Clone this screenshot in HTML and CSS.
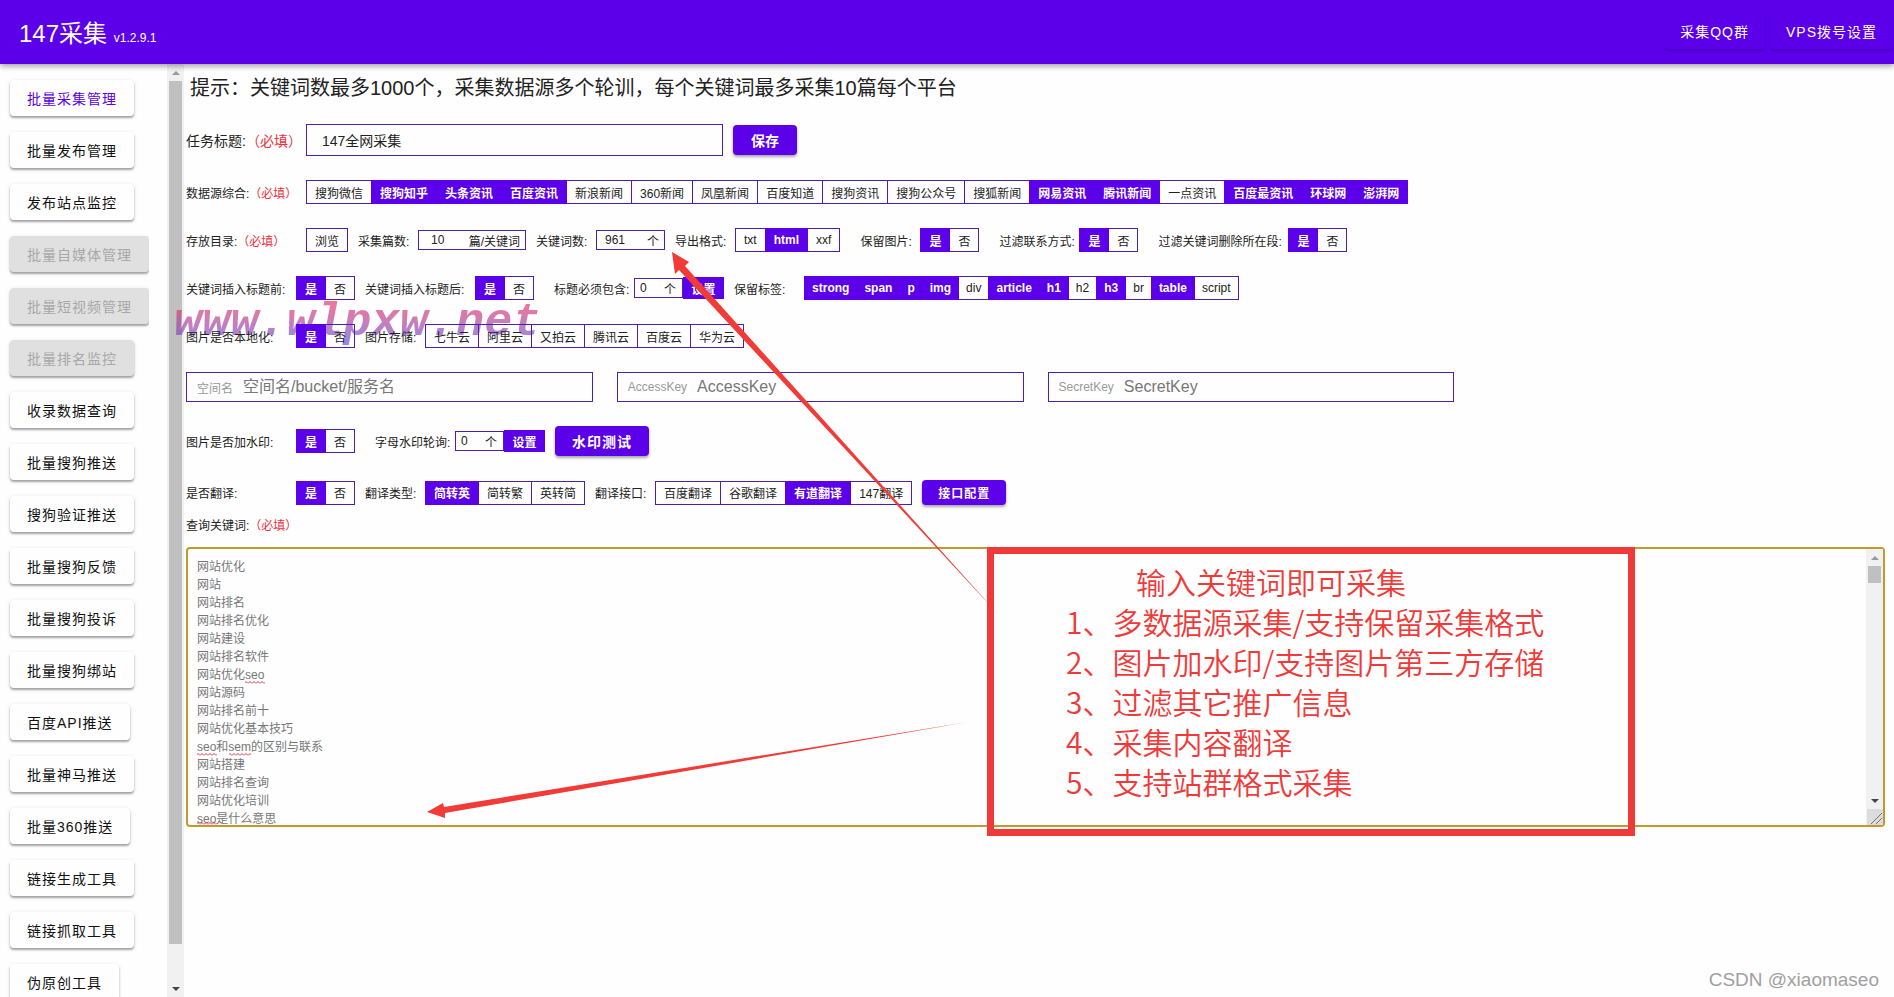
FILE: index.html
```html
<!DOCTYPE html>
<html lang="zh-CN">
<head>
<meta charset="utf-8">
<title>147采集</title>
<link rel="stylesheet" href="styles.css">
</head>
<body>
<header class="topbar">
  <h1 class="brand">147采集 <small class="version">v1.2.9.1</small></h1>
  <nav class="top-actions">
    <button class="top-btn" type="button">采集QQ群</button>
    <button class="top-btn" type="button">VPS拨号设置</button>
  </nav>
</header>

<div class="shell">
  <aside class="sidebar">
    <nav class="menu">
      <button class="menu-btn current" type="button">批量采集管理</button>
      <button class="menu-btn" type="button">批量发布管理</button>
      <button class="menu-btn" type="button">发布站点监控</button>
      <button class="menu-btn" type="button" disabled>批量自媒体管理</button>
      <button class="menu-btn" type="button" disabled>批量短视频管理</button>
      <button class="menu-btn" type="button" disabled>批量排名监控</button>
      <button class="menu-btn" type="button">收录数据查询</button>
      <button class="menu-btn" type="button">批量搜狗推送</button>
      <button class="menu-btn" type="button">搜狗验证推送</button>
      <button class="menu-btn" type="button">批量搜狗反馈</button>
      <button class="menu-btn" type="button">批量搜狗投诉</button>
      <button class="menu-btn" type="button">批量搜狗绑站</button>
      <button class="menu-btn" type="button">百度API推送</button>
      <button class="menu-btn" type="button">批量神马推送</button>
      <button class="menu-btn" type="button">批量360推送</button>
      <button class="menu-btn" type="button">链接生成工具</button>
      <button class="menu-btn" type="button">链接抓取工具</button>
      <button class="menu-btn" type="button">伪原创工具</button>
    </nav>
    <div class="scrollbar" aria-hidden="true">
      <span class="arrow up"></span>
      <span class="track"><span class="thumb"></span></span>
      <span class="arrow down"></span>
    </div>
  </aside>

  <main class="content">
    <p class="tip">提示：关键词数最多1000个，采集数据源多个轮训，每个关键词最多采集10篇每个平台</p>

    <div class="row">
      <label class="lead lead-title" for="title">任务标题:<span class="required">（必填）</span></label>
      <input class="title-input" id="title" type="text" value="147全网采集">
      <button class="raised" type="button">保存</button>
    </div>

    <div class="row">
      <span class="lead">数据源综合:<span class="required">（必填）</span></span>
      <div class="seg">
        <button type="button">搜狗微信</button><button type="button" class="on">搜狗知乎</button><button type="button" class="on">头条资讯</button><button type="button" class="on">百度资讯</button><button type="button">新浪新闻</button><button type="button">360新闻</button><button type="button">凤凰新闻</button><button type="button">百度知道</button><button type="button">搜狗资讯</button><button type="button">搜狗公众号</button><button type="button">搜狐新闻</button><button type="button" class="on">网易资讯</button><button type="button" class="on">腾讯新闻</button><button type="button">一点资讯</button><button type="button" class="on">百度最资讯</button><button type="button" class="on">环球网</button><button type="button" class="on">澎湃网</button>
      </div>
    </div>

    <div class="row">
      <span class="lead">存放目录:<span class="required">（必填）</span></span>
      <div class="seg"><button type="button">浏览</button></div>
      <div class="item">
        <label class="cap" for="count">采集篇数:</label>
        <span class="unit-box unit-wide"><input id="count" type="text" value="10"><span>篇/关键词</span></span>
      </div>
      <div class="item">
        <label class="cap" for="words">关键词数:</label>
        <span class="unit-box unit-mid"><input id="words" type="text" value="961"><span>个</span></span>
      </div>
      <div class="item">
        <span class="cap">导出格式:</span>
        <div class="seg"><button type="button">txt</button><button type="button" class="on">html</button><button type="button">xxf</button></div>
      </div>
      <div class="item apart">
        <span class="cap">保留图片:</span>
        <div class="seg"><button type="button" class="on">是</button><button type="button">否</button></div>
      </div>
      <div class="item apart">
        <span class="cap cap-6">过滤联系方式:</span>
        <div class="seg"><button type="button" class="on">是</button><button type="button">否</button></div>
      </div>
      <div class="item apart">
        <span class="cap cap-10">过滤关键词删除所在段:</span>
        <div class="seg"><button type="button" class="on">是</button><button type="button">否</button></div>
      </div>
    </div>

    <div class="row">
      <span class="lead lead-narrow">关键词插入标题前:</span>
      <div class="seg"><button type="button" class="on">是</button><button type="button">否</button></div>
      <div class="item">
        <span class="cap cap-8">关键词插入标题后:</span>
        <div class="seg"><button type="button" class="on">是</button><button type="button">否</button></div>
      </div>
      <div class="item apart">
        <label class="cap cap-6" for="must">标题必须包含:</label>
        <span class="unit-box"><input id="must" type="text" value="0"><span>个</span></span>
        <button class="set-btn" type="button">设置</button>
      </div>
      <div class="item">
        <span class="cap cap-5">保留标签:</span>
        <div class="seg tags"><button type="button" class="on">strong</button><button type="button" class="on">span</button><button type="button" class="on">p</button><button type="button" class="on">img</button><button type="button">div</button><button type="button" class="on">article</button><button type="button" class="on">h1</button><button type="button">h2</button><button type="button" class="on">h3</button><button type="button">br</button><button type="button" class="on">table</button><button type="button">script</button></div>
      </div>
    </div>

    <div class="row">
      <span class="lead lead-narrow">图片是否本地化:</span>
      <div class="seg"><button type="button" class="on">是</button><button type="button">否</button></div>
      <div class="item">
        <span class="cap">图片存储:</span>
        <div class="seg"><button type="button">七牛云</button><button type="button">阿里云</button><button type="button">又拍云</button><button type="button">腾讯云</button><button type="button">百度云</button><button type="button">华为云</button></div>
      </div>
    </div>

    <div class="keys">
      <label class="key-box"><span>空间名</span><input type="text" placeholder="空间名/bucket/服务名"></label>
      <label class="key-box"><span>AccessKey</span><input type="text" placeholder="AccessKey"></label>
      <label class="key-box"><span>SecretKey</span><input type="text" placeholder="SecretKey"></label>
    </div>

    <div class="row">
      <span class="lead lead-narrow">图片是否加水印:</span>
      <div class="seg"><button type="button" class="on">是</button><button type="button">否</button></div>
      <div class="item apart">
        <label class="cap cap-6" for="mark">字母水印轮询:</label>
        <span class="unit-box"><input id="mark" type="text" value="0"><span>个</span></span>
        <button class="set-btn" type="button">设置</button>
      </div>
      <button class="raised spaced" type="button">水印测试</button>
    </div>

    <section class="query">
      <div class="row">
        <span class="lead lead-narrow">是否翻译:</span>
        <div class="seg"><button type="button" class="on">是</button><button type="button">否</button></div>
        <div class="item">
          <span class="cap">翻译类型:</span>
          <div class="seg"><button type="button" class="on">简转英</button><button type="button">简转繁</button><button type="button">英转简</button></div>
        </div>
        <div class="item">
          <span class="cap">翻译接口:</span>
          <div class="seg"><button type="button">百度翻译</button><button type="button">谷歌翻译</button><button type="button" class="on">有道翻译</button><button type="button">147翻译</button></div>
        </div>
        <button class="raised small" type="button">接口配置</button>
      </div>
      <label class="query-label" for="query">查询关键词:<span class="required">（必填）</span></label>
      <div class="query-box">
        <textarea id="query" rows="15" spellcheck="false">网站优化
网站
网站排名
网站排名优化
网站建设
网站排名软件
网站优化seo
网站源码
网站排名前十
网站优化基本技巧
seo和sem的区别与联系
网站搭建
网站排名查询
网站优化培训
seo是什么意思</textarea>
        <div class="scrollbar" aria-hidden="true">
          <span class="arrow up"></span>
          <span class="track"><span class="thumb thumb-short"></span></span>
          <span class="arrow down"></span>
          <svg class="grip" width="16" height="16" viewBox="0 0 16 16"><path d="M4 15L15 4M9 15L15 9" stroke="#777" fill="none"/></svg>
        </div>
        <svg class="squiggles" width="140" height="276" aria-hidden="true">
          <defs><pattern id="wave" width="4" height="3" patternUnits="userSpaceOnUse"><path d="M0 2.5L2 .5L4 2.5" fill="none" stroke="#e8304a"/></pattern></defs>
          <g fill="url(#wave)">
            <rect x="57" y="132" width="20" height="3"/>
            <rect x="9" y="204" width="20" height="3"/>
            <rect x="41" y="204" width="22" height="3"/>
            <rect x="9" y="273" width="20" height="3"/>
          </g>
        </svg>
      </div>
    </section>
  </main>
</div>

<div class="site-mark">www.wlpxw.net</div>

<svg class="arrows" width="1000" height="840" aria-hidden="true">
  <g fill="#f23a36">
    <path d="M672 252L689 262L685 266L998 614L679 270L675 274Z"/>
    <path d="M427 812L443 803L444 807L968 722L445 813L445 818Z"/>
  </g>
</svg>

<div class="note">
  <p class="note-title">输入关键词即可采集</p>
  <p>1、多数据源采集/支持保留采集格式</p>
  <p>2、图片加水印/支持图片第三方存储</p>
  <p>3、过滤其它推广信息</p>
  <p>4、采集内容翻译</p>
  <p>5、支持站群格式采集</p>
</div>

<div class="credit">CSDN @xiaomaseo</div>
</body>
</html>
```

FILE: styles.css
```css
* {
  box-sizing: border-box;
}

body {
  margin: 0;
  height: 100vh;
  display: flex;
  flex-direction: column;
  overflow: hidden;
  position: relative;
  background: #fefefe;
  color: #222;
  font-family: "Liberation Sans", "Noto Sans CJK SC", sans-serif;
  font-size: 12px;
}

button,
input,
textarea {
  font-family: inherit;
  font-size: inherit;
  color: inherit;
  margin: 0;
}

p {
  margin: 0;
}

/* Header */
.topbar {
  flex: none;
  height: 64px;
  padding: 0 1px 2px 19px;
  display: flex;
  align-items: center;
  justify-content: space-between;
  background: #5b00e8;
  color: #fff;
  box-shadow: 0 2px 6px rgba(0, 0, 0, 0.4);
  z-index: 3;
}

.brand {
  margin: 0;
  font-size: 24px;
  font-weight: 400;
}

.version {
  font-size: 12px;
}

.top-actions {
  display: flex;
  gap: 5px;
}

.top-btn {
  height: 36px;
  padding: 0 16px;
  border: 0;
  border-radius: 4px;
  background: transparent;
  box-shadow: 0 2px 2px rgba(0, 0, 0, 0.14);
  font-size: 14px;
  letter-spacing: 1px;
}

/* Layout */
.shell {
  flex: 1;
  min-height: 0;
  display: flex;
}

.sidebar {
  flex: none;
  width: 184px;
  display: flex;
  justify-content: space-between;
}

.menu {
  display: flex;
  flex-direction: column;
  align-items: flex-start;
  gap: 16px;
  padding: 16px 0 0 10px;
  overflow: hidden;
}

.menu-btn {
  flex: none;
  height: 36px;
  padding: 0 17px;
  border: 0;
  border-radius: 4px;
  background: #fefefe;
  box-shadow: 0 2px 2px rgba(0, 0, 0, 0.3), 0 1px 4px rgba(0, 0, 0, 0.12);
  font-size: 14px;
  letter-spacing: 1px;
  color: #111;
}

.menu-btn.current {
  color: #5b00e8;
}

.menu-btn:disabled {
  background: #e0e0e0;
  color: #a8a8a8;
}

.scrollbar {
  flex: none;
  width: 17px;
  display: flex;
  flex-direction: column;
  align-items: center;
  background: #f1f1f1;
}

.arrow {
  height: 17px;
  display: flex;
  align-items: center;
}

.arrow::before {
  content: "";
  border: 4px solid transparent;
}

.up::before {
  border-top-width: 0;
  border-bottom-color: #999;
}

.down::before {
  border-bottom-width: 0;
  border-top-color: #444;
}

.track {
  flex: 1;
  display: flex;
  flex-direction: column;
}

.thumb {
  width: 13px;
  height: 96%;
  background: #c0c0c0;
}

.thumb-short {
  height: 17px;
}

.content {
  flex: 1;
  min-width: 0;
  z-index: 1;
  display: flex;
  flex-direction: column;
  gap: 24px;
  padding: 12px 9px 0 2px;
}

.tip {
  padding-left: 4px;
  font-size: 20px;
  line-height: 24px;
}

/* Form rows */
.row {
  display: flex;
  align-items: center;
  white-space: nowrap;
}

.lead {
  flex: none;
  width: 120px;
}

.lead-narrow {
  width: 110px;
}

.lead-title {
  font-size: 14px;
}

.required {
  color: #f0303c;
}

.title-input {
  width: 417px;
  height: 32px;
  padding: 0 15px;
  border: 1px solid #4a1fb8;
  background: transparent;
  font-size: 14px;
}

.item {
  display: flex;
  align-items: center;
  margin-left: 10px;
}

.apart {
  margin-left: 20px;
}

.cap {
  width: 60px;
}

.cap-5 {
  width: 70px;
}

.cap-6 {
  width: 80px;
}

.cap-8 {
  width: 110px;
}

.cap-10 {
  width: 130px;
}

.seg {
  display: flex;
}

.seg button {
  height: 24px;
  padding: 0 8px;
  border: 1px solid #4a1fb8;
  background: transparent;
}

.seg button + button {
  margin-left: -1px;
}

.seg button.on {
  position: relative;
  border-color: #5b00e8;
  background: #5b00e8;
  color: #fff;
  font-weight: 700;
}

.tags button {
  padding: 0 7px;
}

.unit-box {
  width: 49px;
  height: 20px;
  padding: 0 6px 0 5px;
  display: flex;
  align-items: center;
  border: 1px solid #4a1fb8;
}

.unit-box input {
  flex: 1;
  width: 0;
  min-width: 0;
  padding: 0;
  border: 0;
  background: transparent;
}

.unit-mid {
  width: 69px;
  padding: 0 5px 0 8px;
}

.unit-wide {
  width: 108px;
  padding: 0 5px 0 12px;
}

.set-btn {
  width: 41px;
  height: 22px;
  padding: 0;
  border: 0;
  background: #5b00e8;
  color: #fff;
  font-weight: 700;
}

.raised {
  height: 30px;
  margin-left: 10px;
  padding: 0 18px;
  border: 0;
  border-radius: 4px;
  background: #5b00e8;
  box-shadow: 0 2px 3px rgba(0, 0, 0, 0.35);
  color: #fff;
  font-size: 14px;
  font-weight: 700;
}

.spaced {
  padding: 0 17px;
  letter-spacing: 1px;
}

.small {
  height: 25px;
  padding: 0 16px;
  font-size: 12px;
  letter-spacing: 1px;
}

/* Storage keys */
.keys {
  display: grid;
  grid-template-columns: repeat(4, 1fr);
  gap: 24px;
}

.key-box {
  height: 30px;
  padding: 0 10px;
  display: flex;
  align-items: center;
  gap: 10px;
  border: 1px solid #4a1fb8;
  color: #999;
}

.key-box input {
  flex: 1;
  min-width: 0;
  padding: 0;
  border: 0;
  background: transparent;
  font-size: 16px;
}

.key-box input::placeholder {
  color: #777;
}

/* Keyword list */
.query {
  display: flex;
  flex-direction: column;
  gap: 12px;
}

.query-label {
  line-height: 18px;
}

.query-box {
  position: relative;
  display: flex;
  height: 280px;
  border: 2px solid #c29a2c;
  border-radius: 4px;
}

.query-box textarea {
  flex: 1;
  padding: 9px;
  border: 0;
  outline: 0;
  resize: none;
  overflow: hidden;
  background: transparent;
  color: #777;
  line-height: 18px;
}

.grip {
  background: #dcdcdc;
}

.squiggles {
  position: absolute;
  left: 0;
  top: 0;
}

/* Site mark lies over the sidebar and under the form controls */
.site-mark {
  position: absolute;
  left: 174px;
  top: 297px;
  z-index: 0;
  font: italic 700 47px/52px "Liberation Mono", monospace;
  background: linear-gradient(#e0306a 20%, #5a4ae0 90%);
  background-clip: text;
  -webkit-background-clip: text;
  color: transparent;
  opacity: 0.65;
}

/* Annotations over the form */
.arrows {
  position: absolute;
  left: 0;
  top: 0;
  z-index: 2;
  pointer-events: none;
}

.note {
  position: absolute;
  left: 987px;
  top: 547px;
  z-index: 2;
  width: 648px;
  height: 289px;
  padding: 7px 0 0 72px;
  border: 7px solid #f03a3a;
  color: #f03a3a;
  font-family: "Noto Sans CJK SC", sans-serif;
  font-size: 30px;
  font-weight: 350;
  line-height: 40px;
  white-space: nowrap;
}

.note-title {
  padding-left: 70px;
}

.credit {
  position: absolute;
  right: 15px;
  bottom: 6px;
  font-size: 19px;
  line-height: 22px;
  color: #a0a0a0;
}
```
